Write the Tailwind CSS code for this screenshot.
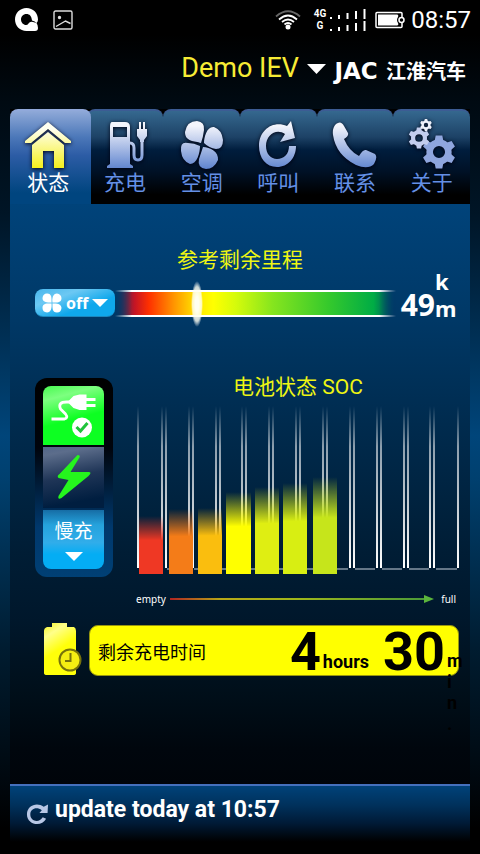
<!DOCTYPE html>
<html lang="zh-CN">
<head>
<meta charset="utf-8">
<meta name="viewport" content="width=device-width, initial-scale=1">
<title>Demo IEV</title>
<script src="https://cdn.jsdelivr.net/npm/@tailwindcss/browser@4"></script>
</head>
<body class="flex min-h-screen flex-col bg-linear-[180deg,#000_0%,#000_4%,#000a12_12%,#001526_25%,#00457a_51%,#00406f_56%,#001c30_76%,#00070d_92%,#000_97%] font-['Roboto','Noto_Sans_CJK_SC',sans-serif] text-white">

<!-- Status bar -->
<div class="flex h-10 shrink-0 items-center pl-[15px] pr-[9px]">
  <svg class="size-6" viewBox="0 0 24 24" fill="#fff"><path fill-rule="evenodd" d="M11.500 0C18 0 23 5 23 11.500Q23 13.500 21.500 15Q23 17 23 20Q23 23 20 23H11.500C5 23 0 18 0 11.500S5 0 11.500 0ZM11.500 6C8 6 6 8.500 6 11.500S8.500 17 11 17Q12.500 17 13.500 15.500Q15 13 18 14L21.500 15Q20 13 17 12.500C16.500 8 14.500 6 11.500 6Z"/></svg>
  <svg class="ml-[14px] size-5" viewBox="0 0 20 20" fill="none" stroke="#ddd" stroke-width="1.400"><rect x="1" y="1" width="18" height="18" rx="1.500"/><path d="M3 16.500 12.500 11 17.500 13.500"/><circle cx="6.500" cy="7.500" r="1" fill="#fff"/></svg>
  <svg class="ml-auto h-5 w-[26px]" viewBox="0 0 26 20" fill="none" stroke-width="1.800"><path d="M1 6.500Q13-4 25 6.500" stroke="#666"/><path d="M4 9.500Q13 1.500 22 9.500M7 12Q13 7 19 12M9.500 14.500Q13 11.500 16.500 14.500" stroke="#fff"/><circle cx="13" cy="17" r="2.500" fill="#fff"/></svg>
  <div class="ml-[13px] flex flex-col items-center text-[10px] leading-[12px] font-bold"><span>4G</span><span>G</span></div>
  <svg class="ml-[3px] h-6 w-[38px]" viewBox="0 0 38 24" fill="#fff"><path d="M1 9h2v2H1zM9 7h2v4H9zM17.500 5h2v6h-2zM26 3h2v8h-2zM34.500 1h2v10h-2zM1 21h2v2H1zM9 19h2v4H9zM17.500 17h2v6h-2zM26 15h2v8h-2zM34.500 13h2v10h-2z"/></svg>
  <svg class="ml-[8px] h-[18px] w-[30px]" viewBox="0 0 30 18"><rect x="1" y="1.500" width="26" height="15" rx="1" fill="none" stroke="#fff" stroke-width="1.500"/><path d="M3 3.500H22Q24 4 23 6Q21 9 23 12Q24 14 22 14.500H3Z" fill="#fff"/><circle cx="26.500" cy="9" r="2.500" fill="#000" stroke="#fff" stroke-width="1.500"/></svg>
  <time class="ml-[6px] text-2xl leading-10">08:57</time>
</div>

<!-- Title -->
<header class="mx-[10px] flex h-[69px] shrink-0 items-start justify-end">
  <h1 class="mt-3 text-[27px] leading-8 text-[#f7ec35]">Demo IEV</h1>
  <div class="mt-[17px] ml-[8px] flex h-[27px] items-center pr-[4px] whitespace-nowrap">
    <svg class="mb-[3px] h-[10px] w-[19px]" viewBox="0 0 19 10"><path d="M0 0H19L9.500 10Z" fill="#fff"/></svg>
    <span class="w-[60px] text-center font-['DejaVu_Sans'] text-[23px] leading-6 font-bold">JAC</span>
    <span class="font-['Noto_Sans_CJK_SC'] text-[20px] leading-6 font-bold">江淮汽车</span>
  </div>
</header>

<svg class="absolute size-0" aria-hidden="true"><defs>
  <linearGradient id="silver" x1="0" y1="0" x2="0" y2="48" gradientUnits="userSpaceOnUse"><stop offset="0.100" stop-color="#f4f5fc"/><stop offset="1" stop-color="#5f84cf"/></linearGradient>
  <linearGradient id="gold" x1="0" y1="0" x2="0" y2="1"><stop offset="0.150" stop-color="#fffff0"/><stop offset="1" stop-color="#f5f01c"/></linearGradient>
  <g id="gear"><circle r="8.500" fill="none" stroke-width="6"/><path d="M-3-15H3L4-10H-4ZM-3 15H3L4 10H-4Z" stroke="none"/><path transform="rotate(60)" d="M-3-15H3L4-10H-4ZM-3 15H3L4 10H-4Z" stroke="none"/><path transform="rotate(120)" d="M-3-15H3L4-10H-4ZM-3 15H3L4 10H-4Z" stroke="none"/></g>
</defs></svg>

<!-- Tabs -->
<nav class="mx-[10px] grid h-[95px] shrink-0 grid-cols-6 bg-black text-[21px] leading-6 text-[#6490e6]">
  <a href="#" aria-current="page" class="z-10 -mr-[4px] flex flex-col items-center gap-[2px] rounded-t-lg border-t-2 border-[#91a9db] bg-linear-[180deg,#8fa9d8_0%,#4c78b9_28%,#2c5ca5_48%,#00457f_88%] pt-[10px] pr-[4px] text-white">
    <svg class="size-12 drop-shadow-[0_1px_2px_#001]" viewBox="0 0 48 48"><path fill="url(#gold)" d="M24 1 47 20V22H41L24 8 7 22H1V20ZM24 11 40 24V47H30V30H19V47H8V24Z"/></svg><span>状态</span></a>
  <a href="#" class="flex flex-col items-center gap-[2px] rounded-t-lg border-t-2 border-[#3c5c94] bg-linear-[180deg,#35688f_0%,#1d4266_28%,#001d3d_42%,#001126_65%,#000_90%] pt-[10px]">
    <svg class="size-12 drop-shadow-[0_1px_2px_#001]" viewBox="0 0 48 48" fill="url(#silver)"><path fill-rule="evenodd" d="M11 1H24Q29 1 29 6V43L32 45V47H6V45L9 43V6Q9 1 11 1ZM12 6V16H26V6Z"/><path fill="none" stroke="url(#silver)" stroke-width="3" d="M29 22Q33 22 33 27V34Q33 39 37 39T41 34V19"/><path d="M36 8H38V1H40V8H42V1H44V8H46V15L43 19V21H39V19L36 15Z"/></svg><span>充电</span></a>
  <a href="#" class="flex flex-col items-center gap-[2px] rounded-t-lg border-t-2 border-[#3c5c94] bg-linear-[180deg,#35688f_0%,#1d4266_28%,#001d3d_42%,#001126_65%,#000_90%] pt-[10px]">
    <svg class="size-12 drop-shadow-[0_1px_2px_#001]" viewBox="0 0 48 48" fill="url(#silver)"><path d="M23 22C17 20 7 21 7 11Q9 0 19 0Q27 1 26 9Q25 17 23 22ZM26 22C26 16 29 5 36 6Q44 9 45 19Q45 28 38 28Q31 27 26 22ZM25 26C32 26 41 31 40 39Q36 48 28 48Q19 47 21 38ZM22 25C22 32 19 43 12 43Q4 40 3 30Q2 20 10 22Q16 22 22 25Z"/></svg><span>空调</span></a>
  <a href="#" class="flex flex-col items-center gap-[2px] rounded-t-lg border-t-2 border-[#3c5c94] bg-linear-[180deg,#35688f_0%,#1d4266_28%,#001d3d_42%,#001126_65%,#000_90%] pt-[10px]">
    <svg class="size-12 drop-shadow-[0_1px_2px_#001]" viewBox="0 0 48 48"><path fill="url(#silver)" d="M33 5 37 0 41 17 26 21 31 13C23 7 12 13 12 25C12 33 17 38 23 38C30 38 35 33 35 25L42 25C42 37 34 46 23 46C12 46 5 37 5 25C5 8 20-1 33 5Z"/></svg><span>呼叫</span></a>
  <a href="#" class="flex flex-col items-center gap-[2px] rounded-t-lg border-t-2 border-[#3c5c94] bg-linear-[180deg,#35688f_0%,#1d4266_28%,#001d3d_42%,#001126_65%,#000_90%] pt-[10px]">
    <svg class="size-12 drop-shadow-[0_1px_2px_#001]" viewBox="0 0 48 48"><path fill="url(#silver)" d="M5 3Q10-1 13 5L17 12Q18 15 13 18Q18 30 28 35Q32 28 35 29L44 33Q47 36 43 43Q37 49 25 44Q5 34 2 14Q1 7 5 3Z"/></svg><span>联系</span></a>
  <a href="#" class="flex flex-col items-center gap-[2px] rounded-t-lg border-t-2 border-[#3c5c94] bg-linear-[180deg,#35688f_0%,#1d4266_28%,#001d3d_42%,#001126_65%,#000_90%] pt-[10px]">
    <svg class="size-12 overflow-visible drop-shadow-[0_1px_2px_#001]" viewBox="0 0 48 48"><use href="#gear" transform="translate(31 31) scale(1.100)" fill="#8fa6de" stroke="#8fa6de"/><use href="#gear" transform="translate(11 17) scale(.7)" fill="#c3cdee" stroke="#c3cdee"/><use href="#gear" transform="translate(18 4) scale(.4)" fill="#eef1fb" stroke="#eef1fb"/></svg><span>关于</span></a>
</nav>

<main class="mx-[10px] flex-1 bg-linear-[180deg,#00437a_0%,#003866_20%,#002b4e_38%,#001d35_60%,#00172b_72%,#000f1a_84%,#00060d_94%,#00040a_100%] pt-[44px] pr-[10px] pl-[25px]">

  <!-- Remaining range -->
  <section>
    <h2 class="pr-[15px] text-center text-[21px] leading-6 text-[#eef613]">参考剩余里程</h2>
    <div class="flex h-[53px] items-end">
      <button class="mb-[8px] flex h-7 w-20 shrink-0 items-center rounded-lg border-b border-[#1c87bd] bg-linear-[160deg,#48b6ec,#6cc8f3_30%,#0fa8ec_65%] pl-[7px] font-['Noto_Sans'] text-base leading-7 font-bold">
        <svg class="size-[20px]" viewBox="0 0 20 20" fill="#fff"><path d="M9.500 9.500C5 10 .5 9 .5 5Q1 .5 5 .5C10 .5 9.500 5 9.500 9.500ZM10.500 9.500C10 5 11 .5 15 .5Q19 1 19.500 5C19.500 10 15 9.500 10.500 9.500ZM10.500 10.500C15 10 19.500 11 19.500 15Q19 19.500 15 19.500C10 19.500 10.500 15 10.500 10.500ZM9.500 10.500C10 15 9 19.500 5 19.500Q.5 19 .5 15C.5 10 5 10.500 9.500 10.500Z"/></svg>
        <span class="ml-[4px]">off</span>
        <svg class="ml-[4px] h-2 w-4" viewBox="0 0 16 8"><path d="M0 0H16L8 8Z" fill="#fff"/></svg>
      </button>
      <div class="relative mb-[8px] h-[27px] flex-1">
        <div class="h-full border-y-2 border-white bg-linear-[90deg,#003968_0%,#c41525_7%,#fe3000_12%,#ff9500_21%,#ffe600_29%,#ff0_35%,#d5fb0b_43%,#86e51e_56%,#35c92c_76%,#00ac45_92%,#003968_100%] mask-x-from-94%"></div>
        <svg class="absolute -top-[9px] left-[27%] h-[46px] w-3" viewBox="0 0 12 46"><defs><radialGradient id="glow"><stop offset=".3" stop-color="#fffff0"/><stop offset=".75" stop-color="#fffff0" stop-opacity=".8"/><stop offset="1" stop-color="#fff" stop-opacity="0"/></radialGradient></defs><ellipse cx="6" cy="23" rx="6" ry="23" fill="url(#glow)"/></svg>
      </div>
      <div class="flex items-end pl-[5px] font-['Noto_Sans'] font-bold">
        <span class="text-[30px] leading-[41px]">49</span>
        <span class="mb-[3px] w-[25px] text-[22px] leading-[27px] break-all">km</span>
      </div>
    </div>
  </section>

  <!-- Battery state and charging mode -->
  <section class="mt-[48px] flex">
    <div class="mt-[5px] flex h-[199px] w-[78px] shrink-0 flex-col rounded-xl bg-linear-[180deg,#000_0%,#00040c_35%,#00386c_75%,#004075_100%] p-[8px] pr-[9px]">
      <button aria-label="已连接" class="h-[59px] rounded-t-lg bg-linear-[165deg,#48fa50,#7dff80_20%,#0dff22_55%]">
        <svg class="size-full" viewBox="0 0 60 59"><path d="M8 33H21Q25 32 22 28L17 23Q14 16 23 16H28" fill="none" stroke="#fff" stroke-width="2.800"/><path d="M24 16 30 10 36 8.500H43V12H52V15H43V18H52V21H43V24H36L30 22Z" fill="#fff"/><circle cx="38.500" cy="41.500" r="10" fill="#fff"/><path d="M33 41 37 45 44 37" fill="none" stroke="#1fc33a" stroke-width="3"/></svg>
      </button>
      <button aria-label="快充" class="mt-[2px] h-[61px] bg-linear-[170deg,#53678a,#5c6d8b_12%,#1f3557_48%,#001e40_85%]">
        <svg class="size-full" viewBox="0 0 60 61"><path d="M34 8Q38 8 35 12L27 25H45Q49 25 45 29L18 51Q14 53 15 49L25 33 15 31Q13 29 16 27Z" fill="#25f51d"/></svg>
      </button>
      <button class="mt-[2px] flex h-[60px] flex-col items-center rounded-b-lg bg-linear-[180deg,#166da5,#25a2dc_25%,#31adea_55%,#04adf4_75%] pt-[8px] text-[19px] leading-7"><span>慢充</span>
        <svg class="mt-[6px] h-[9px] w-[18px]" viewBox="0 0 18 9"><path d="M0 0H18L9 9Z" fill="#fff"/></svg>
      </button>
    </div>
    <div class="ml-[23px] flex-1">
      <h2 class="text-center text-[21px] leading-[28px] text-[#eef613]">电池状态 SOC</h2>
      <svg class="mt-[5px] block h-[168px] w-full" viewBox="0 0 324 168" preserveAspectRatio="none">
        <defs>
          <linearGradient id="line" gradientUnits="userSpaceOnUse" x1="0" y1="0" x2="0" y2="162"><stop offset="0" stop-color="#fff" stop-opacity="0"/><stop offset=".25" stop-color="#fff" stop-opacity=".55"/><stop offset="1" stop-color="#fff"/></linearGradient>
          <linearGradient id="fade" x1="0" y1="0" x2="0" y2="1"><stop offset="0" stop-color="#000"/><stop offset=".42" stop-color="#fff"/></linearGradient>
          <mask id="tops" maskUnits="userSpaceOnUse" x="0" y="0" width="324" height="168"><path fill="url(#fade)" d="M0 110H30V168H0Z"/><path fill="url(#fade)" d="M30 103H60V168H30Z"/><path fill="url(#fade)" d="M60 102H88V168H60Z"/><path fill="url(#fade)" d="M88 86H117V168H88Z"/><path fill="url(#fade)" d="M117 81H145V168H117Z"/><path fill="url(#fade)" d="M145 77H174V168H145Z"/><path fill="url(#fade)" d="M174 71H206V168H174Z"/></mask>
        </defs>
        <path fill="url(#line)" d="M1 0h2v162H1zM25 0h2v162h-2zM29 0h2v162h-2zM52 0h2v162h-2zM56 0h2v162h-2zM79 0h2v162h-2zM83 0h2v162h-2zM105 0h2v162h-2zM109 0h2v162h-2zM132 0h2v162h-2zM136 0h2v162h-2zM159 0h2v162h-2zM163 0h2v162h-2zM186 0h2v162h-2zM190 0h2v162h-2zM213 0h2v162h-2zM217 0h2v162h-2zM240 0h2v162h-2zM244 0h2v162h-2zM267 0h2v162h-2zM271 0h2v162h-2zM293 0h2v162h-2zM297 0h2v162h-2zM321 0h2v162h-2z"/>
        <path stroke="#8797a5" stroke-width="1.500" d="M3 163H25M31 163H52M58 163H79M85 163H105M111 163H132M138 163H159M165 163H186M192 163H212M219 163H239M246 163H266M273 163H293M300 163H321"/>
        <g mask="url(#tops)"><path fill="#ef3824" d="M3 110H27V168H3z"/><path fill="#f47c18" d="M33 103H57V168H33z"/><path fill="#fabe0e" d="M62 102H86V168H62z"/><path fill="#ff0" d="M90 86H115V168H90z"/><path fill="#dfee12" d="M119 81H143V168H119z"/><path fill="#d8ee12" d="M147 77H171V168H147z"/><path fill="#c6e51b" d="M177 71H201V168H177z"/></g>
      </svg>
      <div class="mt-[17px] flex items-center pr-[4px] font-['Noto_Sans'] text-[10px] leading-4">
        <span>empty</span>
        <div class="ml-[4px] h-[2px] flex-1 bg-linear-[90deg,#b02422,#b8a817_20%,#a0b71a_50%,#4c9b38]"></div>
        <svg class="h-2 w-[10px]" viewBox="0 0 10 8"><path d="M0 0 10 4 0 8Z" fill="#5bb53c"/></svg>
        <span class="ml-[7px]">full</span>
      </div>
    </div>
  </section>

  <!-- Remaining charging time -->
  <section class="mt-[16px] flex h-[105px] pl-[8px]">
    <svg class="h-[53px] w-[40px] shrink-0" viewBox="0 0 40 53"><defs><linearGradient id="cell" x1="0" y1="0" x2=".4" y2="1"><stop offset="0" stop-color="#f4f321"/><stop offset=".25" stop-color="#ffff8a"/><stop offset=".6" stop-color="#ffff0a"/></linearGradient></defs><path d="M9 0H24V4H31Q33 5 33 8V50Q33 52 30 52H4Q1 52 1 50V8Q1 5 4 4H9Z" fill="url(#cell)"/><circle cx="27" cy="37" r="10.500" fill="#f5ee12" stroke="#77720c" stroke-width="2"/><path d="M27.500 30V38H22" fill="none" stroke="#77720c" stroke-width="2"/></svg>
    <div class="ml-[6px] mr-px mt-[2px] flex h-[51px] flex-1 rounded-[9px] border border-[#98960f] bg-[#ff0] pl-[8px] text-black">
      <h2 class="text-[18px] leading-[54px]">剩余充电时间</h2>
      <div class="ml-auto flex font-bold">
        <span class="text-[54px] leading-[52px]">4</span><span class="ml-[2px] text-[18px] leading-[71px]">hours</span>
        <span class="ml-[14px] text-[54px] leading-[52px]">30</span>
        <span class="mt-[24px] w-[13px] shrink-0 pl-[2px] text-[18px] leading-[21px] [line-break:anywhere]">min.</span>
      </div>
    </div>
  </section>
</main>

<!-- Update strip -->
<footer class="mx-[10px] h-[70px] shrink-0 border-t-2 border-[#4570bd] bg-linear-[180deg,#004279_0%,#00315c_28%,#001a36_55%,#000_82%]">
  <button class="flex h-12 items-center pl-[16px] text-[23px] leading-[46px] font-bold">
    <svg class="mt-[7px] size-[23px]" viewBox="0 0 48 48"><path fill="#b8c7e5" d="M37 10 46 5 45 23 28 23 33 17C22 9 9 14 9 26C9 40 27 45 35 32L42 35C33 53 2 48 2 26C2 7 23 0 37 10Z"/></svg>
    <span class="ml-[6px]">update today at 10:57</span>
  </button>
</footer>
</body>
</html>
